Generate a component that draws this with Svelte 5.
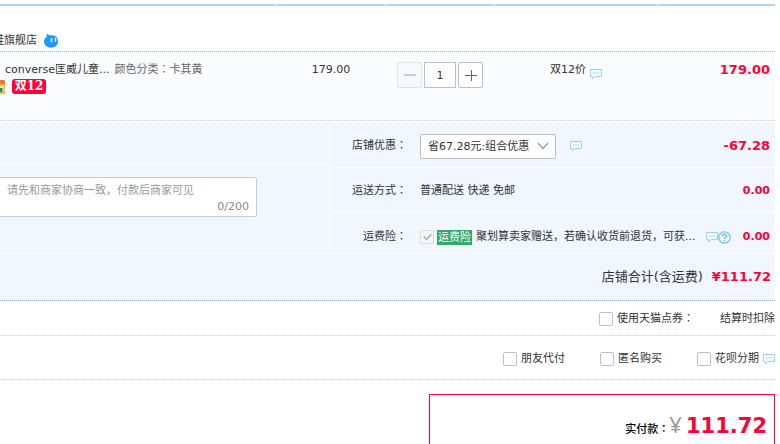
<script lang="ts">
const headers = ['item', 'price', 'quantity', 'promotion', 'subtotal'];

let quantity = $state(1);
let remark = $state('');
let coupon = $state('combo');
let insured = $state(true);
let usePoints = $state(false);

let payOptions = $state([
  { id: 'friend', label: '朋友代付', checked: false, tip: false },
  { id: 'anonymous', label: '匿名购买', checked: false, tip: false },
  { id: 'huabei', label: '花呗分期', checked: false, tip: true }
]);
</script>

{#snippet tip()}
  <svg class="tip" viewBox="0 0 12 12" aria-hidden="true">
    <path d="M.5 1.5h11v7H5l-2.500 2.500V8.500h-2z" fill="#f5fbff" stroke="#9ad0f5" />
    <path d="M3 5h1.200M5.400 5h1.200M7.800 5h1.200" stroke="#7fbfee" />
  </svg>
{/snippet}

{#snippet colon()}<span class="colon">：</span>{/snippet}

<main class="page">
  <div class="columns bars">
    {#each headers as name (name)}
      <span></span>
    {/each}
  </div>

  <header class="shop">
    <span class="shop-name">鞋旗舰店</span>
    <svg class="wangwang" viewBox="0 0 16 16" aria-hidden="true">
      <path d="M4 .5c1.500 1.800 3 2 5 1.800C13 2.500 15 5 15 8.300c0 4-3 6.400-7 6.400S1 12.200 1 8.600C1 6.500 2 5 3.800 3.800 3.500 2.500 3.500 1.500 4 .5z" fill="#1c9bfb" />
      <path d="M8.500 5.800v3M12.500 5.200v3" stroke="#d5efff" stroke-width="1.600" stroke-linecap="round" />
    </svg>
  </header>

  <section class="columns item">
    <div class="goods">
      <div class="goods-line">
        <a class="title" href="#item">converse匡威儿童...</a>
        <span class="spec">颜色分类{@render colon()}卡其黄</span>
      </div>
      <div class="badges">
        <svg class="gift" viewBox="0 0 5 14" aria-hidden="true">
          <path d="M0 0h4l1 1v3H0z" fill="#f0773a" />
          <path d="M0 4h5v10H0z" fill="#f7b83d" />
          <path d="M0 6h3.500v6H0z" fill="#f8f08c" />
          <path d="M0 8h2.500v4H0z" fill="#139c74" />
        </svg>
        <span class="sale">双12</span>
      </div>
    </div>
    <div class="price">179.00</div>
    <div class="stepper">
      <button type="button" aria-label="减少" disabled={quantity <= 1} onclick={() => quantity--}>
        <svg viewBox="0 0 12 12"><path d="M0 6h12" stroke="#ccc" stroke-width="2" /></svg>
      </button>
      <input type="text" aria-label="数量" bind:value={quantity} />
      <button type="button" aria-label="增加" onclick={() => quantity++}>
        <svg viewBox="0 0 12 12"><path d="M0 6.500h12M6.500 1v11" stroke="#666" /></svg>
      </button>
    </div>
    <div class="promotion">双12价 {@render tip()}</div>
    <div class="subtotal amount">179.00</div>
  </section>

  <section class="details">
    <div class="left">
      <div class="blank"></div>
      <div class="remark">
        <textarea aria-label="给卖家留言" maxlength="200" placeholder="选填，请先和商家协商一致，付款后商家可见" bind:value={remark}></textarea>
        <span class="count">{remark.length}/200</span>
      </div>
    </div>
    <div class="right">
      <div class="row">
        <label class="name" for="coupon">店铺优惠{@render colon()}</label>
        <span class="select">
          <select id="coupon" bind:value={coupon}>
            <option value="combo">省67.28元:组合优惠</option>
          </select>
          <svg viewBox="0 0 12 8" aria-hidden="true"><path d="M1 1l5 5.500L11 1" fill="none" stroke="#999" stroke-width="1.300" /></svg>
        </span>
        {@render tip()}
        <span class="amount">-67.28</span>
      </div>
      <div class="row">
        <span class="name">运送方式{@render colon()}</span>
        <span>普通配送 快递 免邮</span>
        <span class="amount small">0.00</span>
      </div>
      <div class="row insurance">
        <label class="name" for="insured">运费险{@render colon()}</label>
        <input id="insured" class="check" type="checkbox" disabled bind:checked={insured} />
        <span class="tag">运费险</span>
        <span class="desc">聚划算卖家赠送，若确认收货前退货，可获...</span>
        <span class="icons">
          {@render tip()}
          <svg class="help" viewBox="0 0 13 13" aria-hidden="true">
            <circle cx="6.500" cy="6.500" r="5.700" fill="none" stroke="#7cc0ef" stroke-width="1.300" />
            <path d="M4.500 5.200c0-2.700 4-2.700 4 0 0 1.300-2 1.400-2 2.800M6.500 9v1.300" fill="none" stroke="#6bb6ea" stroke-width="1.300" />
          </svg>
        </span>
        <span class="amount small">0.00</span>
      </div>
    </div>
  </section>

  <section class="total">
    <span>店铺合计(含运费)</span>
    <span class="amount">¥111.72</span>
  </section>

  <section class="options points">
    <label><input class="check" type="checkbox" bind:checked={usePoints} /><span>使用天猫点券{@render colon()}</span></label>
    <span>结算时扣除</span>
  </section>

  <section class="options pay">
    {#each payOptions as option (option.id)}
      <label>
        <input class="check" type="checkbox" bind:checked={option.checked} />{option.label}
        {#if option.tip}{@render tip()}{/if}
      </label>
    {/each}
  </section>

  <section class="payment">
    <span class="pay-name">实付款{@render colon()}</span>
    <span class="yen">¥</span>
    <strong>111.72</strong>
  </section>
</main>

<style>
:global(body) {
  background: #fff;
  overflow: hidden;
}
.page {
  margin-right: 5px;
  padding-top: 4px;
  font: 11px/16px "DejaVu Sans", "Noto Sans CJK SC", sans-serif;
  color: #333;
}
svg {
  display: block;
  flex: none;
}
/* full-width colon centred in its cell */
.colon {
  font-family: "Noto Sans CJK JP", sans-serif;
  line-height: 1;
}
.columns {
  display: grid;
  grid-template-columns: 1fr 108px 108px 162px 117px;
  column-gap: 1px;
}
.bars span {
  height: 2px;
  background: #b2d1ff;
}
.shop {
  display: flex;
  align-items: center;
  gap: 6px;
  height: 21px;
  padding-top: 24px;
  border-bottom: 1px dotted #80b2ff;
}
.shop-name {
  margin-left: -7px;
}
.wangwang {
  width: 16px;
  height: 16px;
}
.item {
  height: 68px;
  background: #fbfcff;
  border-bottom: 1px dotted #ccc;
}
.item > div {
  padding-top: 10px;
}
.goods-line {
  display: flex;
  gap: 5px;
  padding-left: 5px;
}
.title {
  flex: none;
  color: #333;
  text-decoration: none;
}
.spec {
  color: #666;
}
.badges {
  display: flex;
  align-items: center;
  gap: 7px;
  margin-top: 1px;
}
.gift {
  width: 5px;
  height: 14px;
}
.sale {
  width: 34px;
  border-radius: 3px;
  background: #ff0036;
  color: #fff;
  font: bold 12px/15px "DejaVu Serif", "Noto Sans CJK SC", serif;
  text-align: center;
}
.price {
  text-align: center;
}
.stepper {
  display: flex;
  justify-content: center;
  align-items: flex-start;
  gap: 2px;
}
.stepper button,
.stepper input {
  box-sizing: border-box;
  width: 25px;
  height: 26px;
  padding: 0;
  border: 1px solid #bcbfc9;
  border-radius: 2px;
  background: #fff;
  color: #333;
  font: inherit;
}
.stepper input {
  width: 32px;
  border-radius: 0;
  text-align: center;
}
.stepper button:disabled {
  border-color: #e2e3e6;
  background: #f7f8fa;
}
.stepper svg {
  width: 12px;
  height: 12px;
  margin: auto;
}
.promotion {
  display: flex;
  justify-content: center;
  gap: 4px;
}
.tip {
  width: 12px;
  height: 12px;
}
.promotion :global(.tip) {
  margin-top: 6px;
}
.amount {
  color: #ff0036;
  font-size: 13px;
  font-weight: bold;
}
.amount.small {
  font-size: 11px;
}
.subtotal {
  padding-right: 5px;
  text-align: right;
}
.details {
  display: grid;
  grid-template-columns: 1fr 445px;
  column-gap: 1px;
  margin-top: 2px;
}
.left,
.right {
  display: flex;
  flex-direction: column;
  gap: 1px;
}
.blank {
  height: 40px;
  background: #f1f6ff;
}
.remark {
  position: relative;
  flex: 1;
  padding: 13px 72px 0 0;
  background: #f1f6ff;
}
textarea {
  display: block;
  box-sizing: border-box;
  width: calc(100% + 32px);
  height: 40px;
  margin-left: -32px;
  padding: 5px;
  border: 1px solid #ccc;
  border-radius: 2px;
  background: #fff;
  font: inherit;
  resize: none;
}
textarea::placeholder {
  color: #999;
}
.count {
  position: absolute;
  top: 35px;
  right: 80px;
  color: #888;
}
.row {
  display: flex;
  align-items: center;
  box-sizing: border-box;
  height: 44px;
  padding: 2px 5px 0 0;
  background: #f1f6ff;
}
.row .name {
  flex: none;
  width: 77px;
  margin-right: 13px;
  text-align: right;
}
.row .amount {
  margin-left: auto;
}
.select {
  position: relative;
  margin-right: 14px;
}
select {
  display: block;
  box-sizing: border-box;
  width: 136px;
  height: 25px;
  padding: 1px 7px 0;
  border: 1px solid #bcbfc9;
  border-radius: 2px;
  appearance: none;
  background: #fff;
  color: #333;
  font: inherit;
}
.select svg {
  position: absolute;
  top: 8px;
  right: 7px;
  width: 12px;
  height: 8px;
}
.insurance {
  height: 40px;
  padding-top: 8px;
}
.check {
  flex: none;
  box-sizing: border-box;
  width: 14px;
  height: 14px;
  margin: 0;
  border: 1px solid #bcbfcc;
  border-radius: 2px;
  appearance: none;
  background: #fff;
}
.check:disabled {
  border-color: #ddd;
  background: #f7f7f7;
}
.check:checked::after {
  content: "";
  display: block;
  width: 3px;
  height: 6px;
  margin: 1px auto 0;
  border: solid #bbb;
  border-width: 0 2px 2px 0;
  transform: rotate(45deg);
}
.tag {
  margin: 0 4px 0 3px;
  padding: 0 1px;
  background: #33a966;
  color: #fff;
  line-height: 15px;
}
.desc {
  white-space: nowrap;
}
.icons {
  display: flex;
  margin-left: auto;
}
.help {
  width: 13px;
  height: 13px;
}
.insurance .amount {
  margin-left: 12px;
}
.total {
  display: flex;
  justify-content: flex-end;
  align-items: center;
  gap: 9px;
  height: 46px;
  margin-top: 1px;
  padding-right: 4px;
  border-bottom: 1px dotted #80b2ff;
  background: #f1f6ff;
  font-size: 13px;
}
.options {
  display: flex;
  justify-content: flex-end;
  align-items: center;
  gap: 36px;
  box-sizing: border-box;
  padding-top: 2px;
  border-bottom: 1px dotted #ccc;
}
.options label {
  display: flex;
  align-items: center;
  gap: 4px;
}
.points {
  gap: 26px;
  height: 35px;
}
.pay {
  gap: 35px;
  height: 44px;
}
.payment {
  display: flex;
  justify-content: flex-end;
  align-items: baseline;
  box-sizing: border-box;
  width: 346px;
  height: 64px;
  margin: 14px 0 0 auto;
  padding: 15px 7px 0 0;
  border: 1px solid #ff0036;
  line-height: 28px;
}
.pay-name {
  font-weight: 500;
  color: #000;
}
.yen {
  margin-right: 4px;
  color: #999;
  font-family: "Open Sans", sans-serif;
  font-size: 22px;
}
.payment strong {
  color: #ff0036;
  font-size: 21px;
}
</style>
